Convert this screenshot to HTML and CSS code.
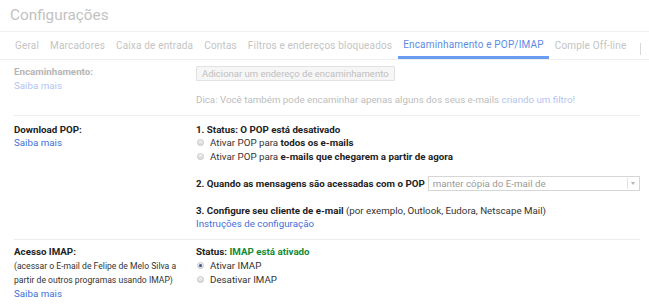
FILE: index.html
```html
<!DOCTYPE html>
<html lang="pt-BR">
<head>
  <meta charset="UTF-8" />
  <title>Configurações</title>
  <link rel="stylesheet" href="styles.css">
</head>
<body>
  <!-- Header -->
  <h1 class="title">Configurações</h1>

  <nav class="tabs">
    <a class="tab">Geral</a>
    <a class="tab">Marcadores</a>
    <a class="tab">Caixa de entrada</a>
    <a class="tab">Contas</a>
    <a class="tab">Filtros e endereços bloqueados</a>
    <a class="tab active">Encaminhamento e POP/IMAP</a>
    <a class="tab">Comple Off-line</a>
    <span class="tabs-more"></span>
  </nav>

  <!-- Settings -->
  <div class="rows">
    <div class="row faded">
      <div class="label">
        <b>Encaminhamento:</b>
        <a class="link">Saiba mais</a>
      </div>
      <div class="content">
        <button class="btn">Adicionar um endereço de encaminhamento</button>
        <p class="tip">Dica: Você também pode encaminhar apenas alguns dos seus e-mails <a class="link">criando um filtro!</a></p>
      </div>
    </div>

    <div class="row pop">
      <div class="label">
        <b>Download POP:</b>
        <a class="link">Saiba mais</a>
      </div>
      <div class="content">
        <b>1. Status: O POP está desativado</b>
        <label class="option"><span class="radio"></span>Ativar POP para&nbsp;<b>todos os e-mails</b></label>
        <label class="option"><span class="radio"></span>Ativar POP para&nbsp;<b>e-mails que chegarem a partir de agora</b></label>
        <div class="spacer"></div>
        <div class="select-line">
          <b>2. Quando as mensagens são acessadas com o POP</b>
          <span class="select">manter cópia do E-mail de<span class="arrow"></span></span>
        </div>
        <div class="spacer"></div>
        <span><b>3. Configure seu cliente de e-mail</b> (por exemplo, Outlook, Eudora, Netscape Mail)</span>
        <a class="link">Instruções de configuração</a>
      </div>
    </div>

    <div class="row imap">
      <div class="label">
        <b>Acesso IMAP:</b>
        <span class="note">(acessar o E-mail de Felipe de Melo Silva a partir de outros programas usando IMAP)</span>
        <a class="link">Saiba mais</a>
      </div>
      <div class="content">
        <b>Status: <span class="on">IMAP está ativado</span></b>
        <label class="option"><span class="radio checked"></span>Ativar IMAP</label>
        <label class="option"><span class="radio"></span>Desativar IMAP</label>
      </div>
    </div>
  </div>
</body>
</html>
```

FILE: styles.css
```css
body {
  margin: 0;
  font-family: Roboto, 'Liberation Sans', Arial, sans-serif;
  font-size: 9.75px;
  color: #333;
  background: #fff;
  overflow: hidden;
}

b {
  color: #222;
}

/* Header */
.title {
  margin: 0;
  height: 31px;
  line-height: 31px;
  padding-left: 10px;
  font-size: 15.3px;
  font-weight: 400;
  color: #c2c2c2;
  border-bottom: 1px solid #f1f1f1;
}

.tabs {
  display: flex;
  height: 27px;
  padding-left: 9.5px;
  border-bottom: 1px solid #eeeeee;
  position: relative;
}

.tab {
  padding: 0 5.5px;
  line-height: 27px;
  font-size: 10px;
  letter-spacing: 0.17px;
  color: #c4c4c4;
  white-space: nowrap;
  box-sizing: border-box;
}

.tab.active {
  color: #5b8ce4;
  border-bottom: 3px solid #6a9cf2;
  line-height: 25px;
}

.tabs-more {
  position: absolute;
  right: 8px;
  top: 11px;
  width: 1px;
  height: 12px;
  background: #d8d8d8;
}

/* Rows */
.rows {
  margin: 0 9px 0 14px;
}

.row {
  display: grid;
  grid-template-columns: 182px 1fr;
  border-bottom: 1px solid #ececec;
  line-height: 13.5px;
}

.label,
.content {
  display: flex;
  flex-direction: column;
  align-items: flex-start;
}

.link {
  color: #3f6fd8;
  text-decoration: none;
}

.row.faded {
  padding: 5px 0 8px;
  color: #bdbdbd;
}

.row.faded b {
  color: #b5b5b5;
}

.row.faded .link {
  color: #b3c4ef;
}

.btn {
  margin: 1px 0 0;
  height: 15px;
  padding: 0 5px;
  font: inherit;
  font-size: 9.5px;
  line-height: 13px;
  color: #c0c0c0;
  background: #f6f6f6;
  border: 1px solid #e2e2e2;
  border-radius: 1px;
}

.tip {
  margin: 12px 0 0;
}

.row.pop {
  padding: 7px 0 8px;
}

.option {
  display: flex;
  align-items: center;
  white-space: nowrap;
}

.radio {
  width: 5px;
  height: 5px;
  margin: 0 6px 0 1px;
  border: 1px solid #c6c6c6;
  border-radius: 50%;
  background: linear-gradient(#f4f4f4, #d8d8d8);
  position: relative;
}

.radio.checked::after {
  content: "";
  position: absolute;
  left: 1px;
  top: 1px;
  width: 3px;
  height: 3px;
  border-radius: 50%;
  background: #34558f;
}

.spacer {
  height: 13.5px;
}

.select-line {
  display: flex;
  align-items: center;
  height: 13.5px;
  white-space: nowrap;
}

.select {
  position: relative;
  flex-shrink: 0;
  width: 212px;
  height: 15px;
  margin-left: 3px;
  padding-left: 4px;
  box-sizing: border-box;
  border: 1px solid #d6d6d6;
  color: #9a9a9a;
  line-height: 13px;
}

.arrow {
  position: absolute;
  right: 0;
  top: 1px;
  width: 11px;
  height: 11px;
  border-left: 1px solid #e2e2e2;
}

.arrow::after {
  content: "";
  position: absolute;
  left: 3px;
  top: 4px;
  border: 2.5px solid transparent;
  border-top: 3px solid #b5b5b5;
}

.row.imap {
  padding: 5px 0 10px;
  border-bottom: none;
  line-height: 14px;
}

.note {
  max-width: 172px;
  font-size: 8.6px;
  color: #333;
}

.on {
  color: #138a36;
}
```
